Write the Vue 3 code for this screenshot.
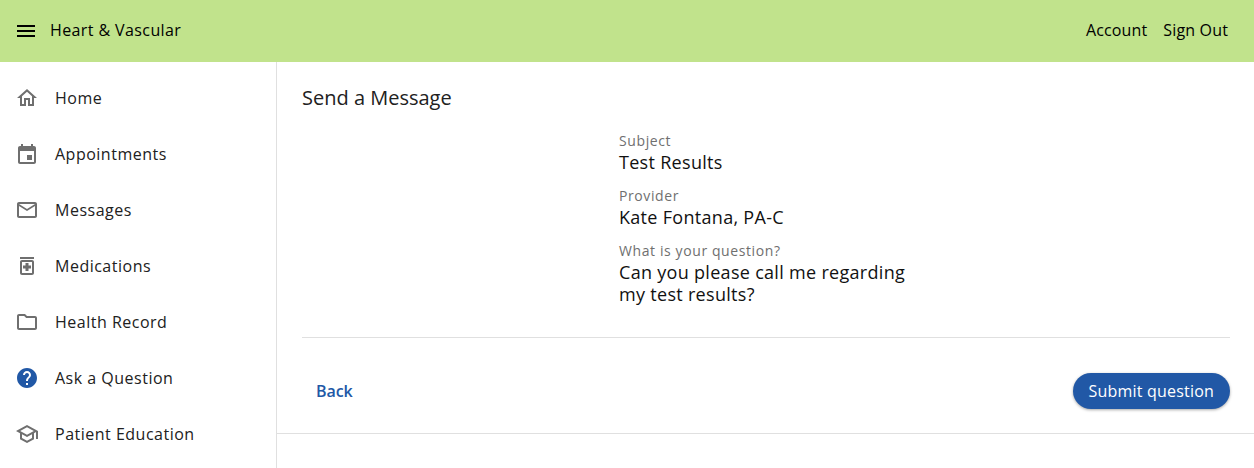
<script setup>
const nav = [
  { label: 'Home', d: 'M12 5.69l5 4.5V18h-2v-6H9v6H7v-7.81l5-4.5M12 3L2 12h3v8h6v-6h2v6h6v-8h3L12 3z' },
  { label: 'Appointments', vb: '0 -1 24 24', d: 'M17 12h-5v5h5v-5zM16 1v2H8V1H6v2H5c-1.11 0-1.99.9-1.99 2L3 19c0 1.1.89 2 2 2h14c1.1 0 2-.9 2-2V5c0-1.1-.9-2-2-2h-1V1h-2zm3 18H5V8h14v11z' },
  { label: 'Messages', d: 'M22 6c0-1.1-.9-2-2-2H4c-1.1 0-2 .9-2 2v12c0 1.1.9 2 2 2h16c1.1 0 2-.9 2-2V6zm-2 0l-8 5-8-5h16zm0 12H4V8l8 5 8-5v10z' },
  { label: 'Medications', d: 'M19 3H5v2h14V3zM17 6H7C5.9 6 5 6.9 5 8v11c0 1.1.9 2 2 2h10c1.1 0 2-.9 2-2V8c0-1.1-.9-2-2-2zm0 13H7V8h10v11zM10.5 17h3v-2.5H16v-3h-2.5V9h-3v2.5H8v3h2.5z' },
  { label: 'Health Record', d: 'M9.17 6l2 2H20v10H4V6h5.17M10 4H4c-1.1 0-1.99.9-1.99 2L2 18c0 1.1.9 2 2 2h16c1.1 0 2-.9 2-2V8c0-1.1-.9-2-2-2h-8l-2-2z' },
  { label: 'Ask a Question', blue: true, d: 'M12 2C6.48 2 2 6.48 2 12s4.48 10 10 10 10-4.48 10-10S17.52 2 12 2zm1 17h-2v-2h2v2zm2.07-7.75l-.9.92C13.45 12.9 13 13.5 13 15h-2v-.5c0-1.1.45-2.1 1.17-2.83l1.24-1.26c.37-.36.59-.86.59-1.41 0-1.1-.9-2-2-2s-2 .9-2 2H8c0-2.21 1.79-4 4-4s4 1.79 4 4c0 .88-.36 1.68-.93 2.25z' },
  { label: 'Patient Education', d: 'M12 3L1 9l4 2.18v6L12 21l7-3.82v-6l2-1.09V17h2V9L12 3zm6.82 6L12 12.72 5.18 9 12 5.28 18.82 9zM17 15.99l-5 2.73-5-2.73v-3.72L12 15l5-2.73v3.72z' }
]
const fields = [
  { label: 'Subject', value: 'Test Results' },
  { label: 'Provider', value: 'Kate Fontana, PA-C' },
  { label: 'What is your question?', value: 'Can you please call me regarding my test results?' }
]
</script>

<template>
  <div class="page">
    <header class="topbar">
      <div class="brand">
        <svg class="menu" viewBox="0 0 24 24" width="24" height="24"><path d="M3 18h18v-2H3v2zm0-5h18v-2H3v2zm0-7v2h18V6H3z" /></svg>
        <span class="brandname">Heart &amp; Vascular</span>
      </div>
      <nav class="toplinks"><span>Account</span><span>Sign Out</span></nav>
    </header>
    <div class="body">
      <aside class="sidebar">
        <div v-for="item in nav" :key="item.label" class="navitem">
          <svg :viewBox="item.vb || '0 0 24 24'" width="24" height="24" :class="['icon', { blue: item.blue }]"><path :d="item.d" /></svg>
          <span>{{ item.label }}</span>
        </div>
      </aside>
      <main class="main">
        <div class="card">
          <h1>Send a Message</h1>
          <div class="form">
            <div v-for="f in fields" :key="f.label" class="field">
              <div class="label">{{ f.label }}</div>
              <div class="value">{{ f.value }}</div>
            </div>
          </div>
          <div class="actions">
            <button class="back">Back</button>
            <button class="submit">Submit question</button>
          </div>
        </div>
      </main>
    </div>
  </div>
</template>

<style>
html, body { margin: 0; background: #fff; }
</style>

<style scoped>
.page { width: 1254px; height: 468px; overflow: hidden; font-family: "Open Sans", sans-serif; color: #1a1a1a; display: flex; flex-direction: column; }
.topbar { height: 62px; box-sizing: border-box; flex: none; background: #c1e38c; display: flex; align-items: center; justify-content: space-between; padding: 0 26px 0 14px; color: #000; font-size: 16px; line-height: 22px; }
.brand { display: flex; align-items: center; gap: 12px; }
.brandname { letter-spacing: .4px; margin-bottom: 2px; }
.menu { fill: #000; display: block; }
.toplinks { display: flex; gap: 16px; letter-spacing: .15px; margin-bottom: 2px; }
.body { flex: 1; display: flex; min-height: 0; }
.sidebar { width: 276px; flex: none; border-right: 1px solid #e0e0e0; padding-top: 8px; }
.navitem { height: 56px; display: flex; align-items: center; gap: 16px; padding-left: 15px; font-size: 16px; letter-spacing: .5px; color: #212121; }
.icon { fill: #6f6f6f; flex: none; display: block; overflow: visible; }
.icon.blue { fill: #2158a6; }
.main { flex: 1; min-width: 0; }
.card { border-bottom: 1px solid #e0e0e0; padding: 0 24px 0 25px; height: 372px; box-sizing: border-box; display: flex; flex-direction: column; }
h1 { margin: 0; font-size: 20px; font-weight: 400; line-height: 28px; padding-top: 22px; color: #212121; }
.form { width: 294px; margin: 0 auto; padding: 20px 0 32px; }
.field { margin-bottom: 14px; }
.field:last-child { margin-bottom: 0; }
.label { font-size: 14px; line-height: 17px; letter-spacing: .6px; color: #6f6f6f; }
.value { font-size: 18px; line-height: 22px; letter-spacing: .3px; color: #111; margin-top: 2px; }
.actions { border-top: 1px solid #e0e0e0; flex: 1; display: flex; align-items: center; justify-content: space-between; padding-top: 11px; }
button { font-family: inherit; border: 0; cursor: pointer; font-size: 16px; font-weight: 500; letter-spacing: .2px; }
.back { background: none; color: #2158a6; font-weight: 600; letter-spacing: -.1px; padding: 0 14px; }
.submit { background: #2158a6; color: #fff; height: 36px; border-radius: 18px; padding: 0 16px; box-shadow: 0 1px 3px rgba(0,0,0,.35); }
</style>
